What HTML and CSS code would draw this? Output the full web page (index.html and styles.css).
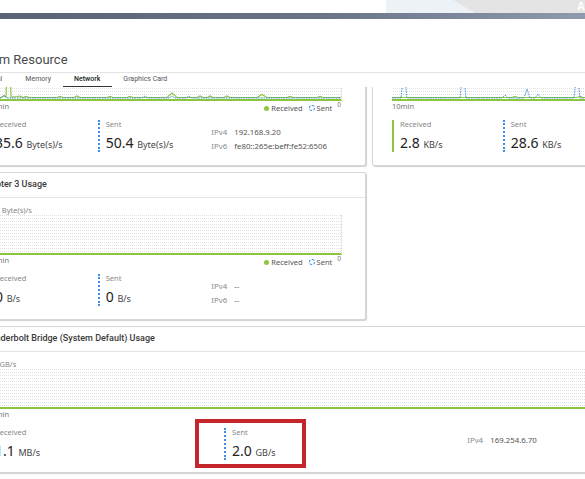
FILE: index.html
```html
<!DOCTYPE html>
<html lang="en">
<head>
    <meta charset="UTF-8">
    <meta name="viewport" content="width=device-width, initial-scale=1.0">
    <title>System Resource</title>
    <link rel="stylesheet" href="styles.css">
</head>
<body>
    <header class="topbar">
        <div class="topbar-top">
            <div class="topbar-space"></div>
            <div class="topbar-deco"><span>App Center</span></div>
        </div>
        <div class="topbar-rule"></div>
    </header>

    <main class="window">
        <div class="page">
            <h1 class="page-title">System Resource</h1>
            <nav class="tabs">
                <span class="tab">General</span>
                <span class="tab">Memory</span>
                <span class="tab tab-active">Network</span>
                <span class="tab">Graphics Card</span>
            </nav>
        </div>

        <div class="viewport">
            <div class="page cards">
                <!-- Adapter 1 -->
                <section class="card">
                    <header class="card-head">Adapter 1 Usage</header>
                    <div class="card-body">
                        <div class="chart-unit">100 Byte(s)/s</div>
                        <div class="chart">
                            <svg width="100%" height="38" viewBox="0 0 354 38" preserveAspectRatio="none">
                                <polyline class="line-rx" points="0,36.5 14,36.5 17,35 19,36 20,2 23,2 24,36 30,35.5 33,35 36,36.5 39,35.5 42,36.5 70,36.5 73,35.5 76,36.5 87,36.5 90,35 93,36.5 120,36.5 123,35.5 126,36.5 140,36.5 143,35.5 146,36.5 180,36.5 185,32 190,36.5 210,36.5 213,35 216,36.5 220,36.5 223,35 226,36.5 237,36.5 240,35 243,36.5 270,36.5 275,33.5 280,36.5 300,36.5 303,35.5 306,36.5 330,36.5 333,35.5 336,36.5 354,36.5"/>
                                <polyline class="line-tx" points="0,37 14,37 17,34 20,37 155,37 158,35 161,37 182,37 185,35 188,37 199,37 202,35 205,37 354,37"/>
                            </svg>
                        </div>
                        <div class="chart-foot">
                            <span>10min</span>
                            <span class="legend"><i class="dot dot-rx"></i>Received<i class="dot dot-tx"></i>Sent</span>
                            <span class="chart-zero">0</span>
                        </div>
                        <div class="stats">
                            <div class="stat stat-rx">
                                <div class="stat-label">Received</div>
                                <div class="stat-value">35.6 <small>Byte(s)/s</small></div>
                            </div>
                            <div class="stat stat-tx">
                                <div class="stat-label">Sent</div>
                                <div class="stat-value">50.4 <small>Byte(s)/s</small></div>
                            </div>
                            <dl class="ip">
                                <div class="ip-row"><dt>IPv4</dt><dd>192.168.9.20</dd></div>
                                <div class="ip-row"><dt>IPv6</dt><dd>fe80::265e:beff:fe52:6506</dd></div>
                            </dl>
                        </div>
                    </div>
                </section>

                <!-- Adapter 2 -->
                <section class="card">
                    <header class="card-head">Adapter 2 Usage</header>
                    <div class="card-body">
                        <div class="chart-unit">40 KB/s</div>
                        <div class="chart">
                            <svg width="100%" height="38" viewBox="0 0 354 38" preserveAspectRatio="none">
                                <polyline class="line-rx" points="0,36.5 120,36.5 123,35.5 126,36.5 185,36.5 188,35.5 191,36.5 354,36.5"/>
                                <polyline class="line-tx" points="0,37 9,37 11,18 13,18 15,37 68,37 70,18 72,18 74,37 110,37 113,34 116,37 132,37 135,28 138,37 143,37 146,33 149,37 182,37 184,18 186,18 188,37 354,37"/>
                            </svg>
                        </div>
                        <div class="chart-foot">
                            <span>10min</span>
                            <span class="legend"><i class="dot dot-rx"></i>Received<i class="dot dot-tx"></i>Sent</span>
                            <span class="chart-zero">0</span>
                        </div>
                        <div class="stats">
                            <div class="stat stat-rx">
                                <div class="stat-label">Received</div>
                                <div class="stat-value">2.8 <small>KB/s</small></div>
                            </div>
                            <div class="stat stat-tx">
                                <div class="stat-label">Sent</div>
                                <div class="stat-value">28.6 <small>KB/s</small></div>
                            </div>
                            <dl class="ip">
                                <div class="ip-row"><dt>IPv4</dt><dd>10.0.0.12</dd></div>
                            </dl>
                        </div>
                    </div>
                </section>

                <!-- Adapter 3 -->
                <section class="card">
                    <header class="card-head">Adapter 3 Usage</header>
                    <div class="card-body">
                        <div class="chart-unit">100 Byte(s)/s</div>
                        <div class="chart"></div>
                        <div class="chart-foot">
                            <span>10min</span>
                            <span class="legend"><i class="dot dot-rx"></i>Received<i class="dot dot-tx"></i>Sent</span>
                            <span class="chart-zero">0</span>
                        </div>
                        <div class="stats">
                            <div class="stat stat-rx">
                                <div class="stat-label">Received</div>
                                <div class="stat-value">0 <small>B/s</small></div>
                            </div>
                            <div class="stat stat-tx">
                                <div class="stat-label">Sent</div>
                                <div class="stat-value">0 <small>B/s</small></div>
                            </div>
                            <dl class="ip">
                                <div class="ip-row"><dt>IPv4</dt><dd>--</dd></div>
                                <div class="ip-row"><dt>IPv6</dt><dd>--</dd></div>
                            </dl>
                        </div>
                    </div>
                </section>

                <!-- Thunderbolt -->
                <section class="card card-wide">
                    <header class="card-head">Thunderbolt Bridge (System Default) Usage</header>
                    <div class="card-body">
                        <div class="chart-unit">2.5 GB/s</div>
                        <div class="chart"></div>
                        <div class="chart-foot">
                            <span>10min</span>
                            <span class="legend"><i class="dot dot-rx"></i>Received<i class="dot dot-tx"></i>Sent</span>
                            <span class="chart-zero">0</span>
                        </div>
                        <div class="stats">
                            <div class="stat stat-rx">
                                <div class="stat-label">Received</div>
                                <div class="stat-value">1.1 <small>MB/s</small></div>
                            </div>
                            <div class="stat stat-tx stat-flag">
                                <div class="stat-label">Sent</div>
                                <div class="stat-value">2.0 <small>GB/s</small></div>
                            </div>
                            <dl class="ip">
                                <div class="ip-row"><dt>IPv4</dt><dd>169.254.6.70</dd></div>
                            </dl>
                        </div>
                    </div>
                </section>
            </div>
        </div>
    </main>
</body>
</html>
```

FILE: styles.css
```css
:root {
    --green: #8cc63e;
    --blue: #3d8ee6;
    --text-color: #333;
    --muted: #888;
    --line: #e3e3e3;
    --flag: #c4262c;
}
*, *::before, *::after {
    box-sizing: border-box;
}
body {
    margin: 0;
    width: 585px;
    height: 479px;
    overflow: hidden;
    background-color: #fff;
    color: var(--text-color);
    font-family: "Noto Sans", sans-serif;
}

/* top bar */
.topbar-top {
    display: flex;
    height: 13px;
}
.topbar-space {
    flex: 1;
}
.topbar-deco {
    width: 199px;
    padding-left: 191px;
    overflow: hidden;
    white-space: nowrap;
    background: linear-gradient(30.6deg, #edf2f7 40.3%, #e4e4e4 40.3%);
    color: #fff;
    font: bold 11px/12px "Liberation Sans", sans-serif;
}
.topbar-rule {
    height: 6px;
    background: linear-gradient(to right, #5a6276, #6a7388 55%, #8f9aaf);
}

/* page frame, scrolled left */
.window {
    overflow: hidden;
}
.page {
    width: 804px;
    margin-left: -33px;
}
.page-title {
    margin: 0;
    padding: 33px 0 4px;
    border-bottom: 1px solid var(--line);
    font: 400 13px/16px Roboto, sans-serif;
    color: #4a4a4a;
}
.tabs {
    display: flex;
    height: 14px;
}
.tab {
    padding: 0 11.5px;
    font: 7px/13px Roboto, sans-serif;
    color: #555;
}
.tab-active {
    font-weight: 500;
    color: #222;
    border-bottom: 1.5px solid #333;
}

.viewport {
    height: 392px;
    overflow: hidden;
}
.cards {
    display: grid;
    grid-template-columns: 399px 399px;
    gap: 6px;
    margin-top: -69px;
}

/* cards */
.card {
    background-color: #fff;
    border: 1px solid #d6d6d6;
    border-radius: 2px;
    box-shadow: 1px 1px 1px rgba(0, 0, 0, 0.18);
}
.card-wide {
    grid-column: 1 / -1;
}
.card-head {
    height: 25px;
    padding-left: 12px;
    border-bottom: 1px solid var(--line);
    font: 500 9px/23px Roboto, sans-serif;
    color: #3a3a3a;
    white-space: nowrap;
}
.card-body {
    padding: 8px 23px 12px 19px;
}
.chart-unit {
    font-size: 7.5px;
    line-height: 9px;
    color: var(--muted);
}
.chart {
    height: 40px;
    border-bottom: 2px solid var(--green);
    border-right: 1px dotted #d0d0d0;
    background-image:
        linear-gradient(to right, #fff 1px, transparent 1px),
        linear-gradient(#e2e2e2 1px, transparent 1px);
    background-size: 2px 100%, 100% 3px;
}
.chart svg {
    display: block;
}
.line-rx {
    fill: none;
    stroke: var(--green);
    stroke-width: 1.2;
}
.line-tx {
    fill: none;
    stroke: var(--blue);
    stroke-width: 1;
    stroke-dasharray: 1.5 1;
}
.chart-foot {
    display: flex;
    align-items: flex-start;
    height: 12px;
    font-size: 7.5px;
    line-height: 10px;
    color: #777;
}
.legend {
    display: flex;
    align-items: center;
    margin-left: auto;
    margin-top: 2px;
    color: #555;
}
.dot {
    display: inline-block;
    width: 5px;
    height: 5px;
    border-radius: 50%;
    margin-right: 2px;
}
.dot-rx {
    background-color: var(--green);
}
.dot-tx {
    width: 6px;
    height: 6px;
    margin-left: 6px;
    border: 1px dashed var(--blue);
}
.chart-zero {
    margin: 0 1px 0 5px;
    font-size: 6.5px;
    line-height: 8px;
}

/* stats */
.stats {
    display: grid;
    grid-template-columns: 31.2% 32% 1fr;
    margin-top: 7px;
}
.stat {
    height: 32px;
    padding-left: 6px;
    white-space: nowrap;
}
.stat-rx {
    border-left: 2px solid var(--green);
}
.stat-tx {
    border-left: 2px dotted var(--blue);
}
.stat-label {
    margin-bottom: 4px;
    font-size: 7.5px;
    line-height: 9px;
    color: var(--muted);
}
.stat-value {
    font-size: 14px;
    line-height: 19px;
    color: #222;
}
.stat-value small {
    font-size: 9px;
    color: #444;
}
.stat-flag {
    position: relative;
}
.stat-flag::after {
    content: '';
    position: absolute;
    left: -31px;
    top: -9px;
    width: 111px;
    height: 49px;
    border: 4px solid var(--flag);
}
.ip {
    margin: 0;
    padding-top: 5px;
    font-size: 7.8px;
    line-height: 14px;
    white-space: nowrap;
}
.ip-row {
    display: flex;
}
.ip dt {
    width: 23px;
    color: var(--muted);
}
.ip dd {
    margin: 0;
    color: #555;
}
```
